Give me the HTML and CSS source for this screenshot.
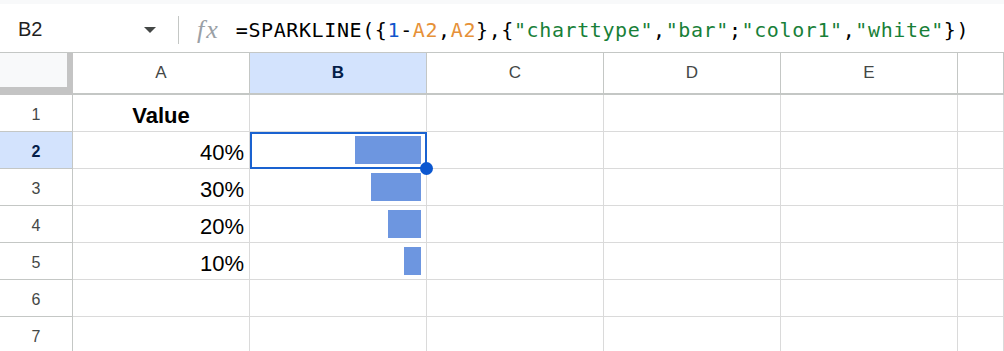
FILE: index.html
```html
<!DOCTYPE html>
<html>
<head>
    <title>Sparkline bar</title>
    <link rel="stylesheet" href="styles.css">
</head>
<body>
    <div class="formula-bar">
        <div class="name-box">
            <span>B2</span>
            <span class="caret"></span>
        </div>
        <div class="divider"></div>
        <span class="fx">fx</span>
        <div class="formula">=SPARKLINE({<span class="f-num">1</span>-<span class="f-ref">A2</span>,<span class="f-ref">A2</span>},{<span class="f-str">"charttype"</span>,<span class="f-str">"bar"</span>;<span class="f-str">"color1"</span>,<span class="f-str">"white"</span>})</div>
    </div>

    <div class="grid">
        <!-- column headers -->
        <div class="corner"></div>
        <div class="col-head">A</div>
        <div class="col-head active">B</div>
        <div class="col-head">C</div>
        <div class="col-head">D</div>
        <div class="col-head">E</div>
        <div class="col-head"></div>

        <!-- row 1 -->
        <div class="row-head">1</div>
        <div class="cell title">Value</div>
        <div class="cell"></div>
        <div class="cell"></div>
        <div class="cell"></div>
        <div class="cell"></div>
        <div class="cell"></div>

        <!-- row 2 -->
        <div class="row-head active">2</div>
        <div class="cell num">40%</div>
        <div class="cell spark selected">
            <div class="bar" style="width: 40%"></div>
            <div class="selection"></div>
            <div class="handle"></div>
        </div>
        <div class="cell"></div>
        <div class="cell"></div>
        <div class="cell"></div>
        <div class="cell"></div>

        <!-- row 3 -->
        <div class="row-head">3</div>
        <div class="cell num">30%</div>
        <div class="cell spark"><div class="bar" style="width: 30%"></div></div>
        <div class="cell"></div>
        <div class="cell"></div>
        <div class="cell"></div>
        <div class="cell"></div>

        <!-- row 4 -->
        <div class="row-head">4</div>
        <div class="cell num">20%</div>
        <div class="cell spark"><div class="bar" style="width: 20%"></div></div>
        <div class="cell"></div>
        <div class="cell"></div>
        <div class="cell"></div>
        <div class="cell"></div>

        <!-- row 5 -->
        <div class="row-head">5</div>
        <div class="cell num">10%</div>
        <div class="cell spark"><div class="bar" style="width: 10%"></div></div>
        <div class="cell"></div>
        <div class="cell"></div>
        <div class="cell"></div>
        <div class="cell"></div>

        <!-- row 6 -->
        <div class="row-head">6</div>
        <div class="cell"></div>
        <div class="cell"></div>
        <div class="cell"></div>
        <div class="cell"></div>
        <div class="cell"></div>
        <div class="cell"></div>

        <!-- row 7 -->
        <div class="row-head">7</div>
        <div class="cell"></div>
        <div class="cell"></div>
        <div class="cell"></div>
        <div class="cell"></div>
        <div class="cell"></div>
        <div class="cell"></div>
    </div>
</body>
</html>
```

FILE: styles.css
```css
* {
    box-sizing: border-box;
}
body {
    margin: 0;
    background-color: #fff;
    font-family: "Liberation Sans", Arial, sans-serif;
    overflow: hidden;
}

/* formula bar */
.formula-bar {
    display: flex;
    align-items: center;
    height: 53px;
    padding-top: 3px;
    border-top: 4px solid #f8f9fa;
    border-bottom: 1px solid #c4c7c5;
}
.name-box {
    display: flex;
    align-items: center;
    justify-content: space-between;
    width: 178px;
    padding: 0 22px 0 18px;
    font-size: 20px;
    color: #1f1f1f;
}
.caret {
    width: 0;
    height: 0;
    border-left: 6.5px solid transparent;
    border-right: 6.5px solid transparent;
    border-top: 6px solid #444746;
}
.divider {
    width: 1px;
    height: 28px;
    background-color: #c4c7c5;
}
.fx {
    margin-left: 18px;
    font: italic 26px "Liberation Serif", serif;
    letter-spacing: 2px;
    color: #9aa0a6;
}
.formula {
    margin-left: 16px;
    font: 20px "DejaVu Sans Mono", monospace;
    letter-spacing: 0.6px;
    white-space: nowrap;
    color: #000;
}
.f-num {
    color: #1155cc;
}
.f-ref {
    color: #e69138;
}
.f-str {
    color: #188038;
}

/* grid */
.grid {
    display: grid;
    grid-template-columns: 73px repeat(5, 177px) 1fr;
    grid-template-rows: 42px repeat(7, 37px);
}
.corner {
    background-color: #f8f9fa;
    border-right: 6px solid #c4c4c4;
    border-bottom: 8px solid #c4c4c4;
}
.col-head {
    display: flex;
    align-items: center;
    justify-content: center;
    border-right: 1px solid #c4c7c5;
    border-bottom: 2px solid #c4c7c5;
    font-size: 17px;
    color: #444746;
}
.row-head {
    display: flex;
    align-items: center;
    justify-content: center;
    padding-top: 4px;
    border-right: 1px solid #c4c7c5;
    border-bottom: 1px solid #c4c7c5;
    font-size: 16px;
    color: #444746;
}
.col-head.active,
.row-head.active {
    background-color: #d3e3fd;
    color: #041e49;
    font-weight: bold;
}
.cell {
    display: flex;
    align-items: flex-end;
    padding: 0 5px 2px;
    border-right: 1px solid #dadada;
    border-bottom: 1px solid #dadada;
    font-size: 22px;
    color: #000;
}
.cell.title {
    justify-content: center;
    font-weight: bold;
}
.cell.num {
    justify-content: flex-end;
}
.cell.spark {
    align-items: stretch;
    justify-content: flex-end;
    padding: 4px 5px;
}
.bar {
    background-color: #6d96e0;
}

/* selection */
.selected {
    position: relative;
}
.selection {
    position: absolute;
    top: 0;
    left: 0;
    right: -1px;
    bottom: -1px;
    border: 2px solid #1a62d0;
}
.handle {
    position: absolute;
    right: -7px;
    bottom: -7px;
    z-index: 2;
    width: 13px;
    height: 13px;
    border-radius: 50%;
    background-color: #0b57d0;
}
```
